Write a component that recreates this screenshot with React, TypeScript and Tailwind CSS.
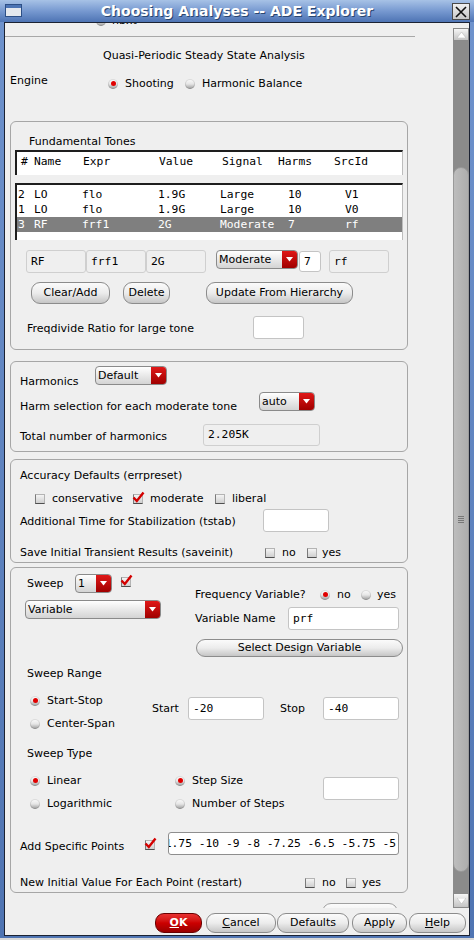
import React from "react";

const MONO = "font-['DejaVu_Sans_Mono',monospace] text-[11.3px]";

const Radio = ({ on }: { on?: boolean }) => (
  <span className="relative inline-block w-[10px] h-[10px] shrink-0 rounded-full bg-linear-to-b from-[#fdfdfd] via-[#e6e6e6] to-[#9a9a9a] shadow-[inset_0_0_0_1px_rgba(0,0,0,0.12)]">
    {on && <span className="absolute left-[2.5px] top-[2px] w-[5px] h-[5px] rounded-full bg-[#e00000]" />}
  </span>
);

const Check = ({ on, className = "" }: { on?: boolean; className?: string }) => (
  <span className={`relative inline-block w-[10px] h-[10px] shrink-0 bg-linear-to-b from-[#f4f4f4] to-[#cfcfcf] border border-[#b4b4b4] border-b-[#4e4e4e] border-l-[#7a7a7a] ${className}`}>
    {on && (
      <svg className="absolute left-[-2px] top-[-4px]" width="13" height="13" viewBox="0 0 13 13">
        <path d="M1.5 6.5 L4.8 10 L11.5 1.5" stroke="#d40000" strokeWidth="2.4" fill="none" />
      </svg>
    )}
  </span>
);

const Combo = ({ text, className = "" }: { text: string; className?: string }) => (
  <div className={`flex h-[19px] rounded-[4px] border border-[#8a8a8a] bg-linear-to-b from-[#ffffff] to-[#d4d4d4] overflow-hidden shrink-0 ${className}`}>
    <div className="flex-1 flex items-center pl-[2px] leading-[14px]">{text}</div>
    <div className="w-[15px] h-full bg-linear-to-b from-[#e01818] to-[#a00000] flex items-center justify-center">
      <svg width="7" height="5" viewBox="0 0 7 5">
        <path d="M0 0 L7 0 L3.5 4.5 Z" fill="#ffffff" />
      </svg>
    </div>
  </div>
);

const Btn = ({ children, className = "" }: { children: React.ReactNode; className?: string }) => (
  <div className={`flex items-center justify-center shrink-0 rounded-[9px] border border-[#8c8c8c] bg-linear-to-b from-[#fbfbfb] via-[#ececec] to-[#c6c6c6] ${className}`}>
    {children}
  </div>
);

const RO = ({ children, className = "" }: { children?: React.ReactNode; className?: string }) => (
  <div className={`flex items-center pl-[4px] bg-[#efefef] border border-[#cfcfcf] rounded-[3px] shrink-0 ${MONO} ${className}`}>
    {children}
  </div>
);

const Input = ({ children, className = "" }: { children?: React.ReactNode; className?: string }) => (
  <div className={`flex items-center pl-[4px] bg-white border border-[#c4c4c4] rounded-[3px] shrink-0 ${MONO} ${className}`}>
    {children}
  </div>
);

const Group = ({ children, className = "" }: { children: React.ReactNode; className?: string }) => (
  <div className={`ml-[5px] w-[398px] border border-[#a6a6a6] rounded-[6px] flex flex-col shrink-0 ${className}`}>{children}</div>
);

const rows = [
  ["2", "LO", "flo", "1.9G", "Large", "10", "V1"],
  ["1", "LO", "flo", "1.9G", "Large", "10", "V0"],
  ["3", "RF", "frf1", "2G", "Moderate", "7", "rf"],
];

export default function App() {
  return (
    <div className="w-[474px] h-[940px] bg-[#d8d8d8] overflow-hidden font-['DejaVu_Sans',sans-serif] text-[11px] leading-[14px] text-black">
      <div className="w-[474px] h-[938px] bg-linear-to-b from-[#6f93cd] to-[#4f74b2] flex flex-col">
        {/* Title bar */}
        <div className="h-[22px] relative flex items-center justify-center bg-linear-to-b from-[#a7c2e6] via-[#7799d0] to-[#4e74b4]">
          <svg className="absolute left-[5px] top-[4px]" width="17" height="13" viewBox="0 0 17 13">
            <rect x="0.5" y="0.5" width="16" height="12" fill="#e4e8ee" stroke="#2d4f86" />
            <rect x="1" y="1" width="15" height="3" fill="#4c74b4" />
          </svg>
          <span className="text-[14px] font-bold text-white leading-[18px] [text-shadow:1px_1px_0_#2a4670]">
            Choosing Analyses -- ADE Explorer
          </span>
          <div className="absolute right-[4px] top-[3px] w-[18px] h-[17px] bg-linear-to-b from-[#f0f0f0] to-[#c8c8c8] border border-[#4a4a4a] flex items-center justify-center">
            <svg width="12" height="12" viewBox="0 0 12 12">
              <path d="M1 1 L11 11 M11 1 L1 11" stroke="#111" strokeWidth="1.6" />
            </svg>
          </div>
        </div>

        {/* Content */}
        <div className="ml-[4px] w-[466px] h-[914px] border border-[#1b2233] bg-[#efefef] flex flex-col">
          <div className="h-[885px] flex">
            {/* Main viewport */}
            <div className="w-[448px] h-[885px] overflow-hidden flex flex-col">
              <div className="h-[13px] overflow-hidden shrink-0">
                <div className="mt-[-9px] pl-[91px] flex items-center h-[14px]">
                  <Radio />
                  <span className="ml-[6px]">nbxt</span>
                </div>
              </div>
              <div className="h-px w-[410px] bg-[#a8a8a8] shrink-0" />

              <div className="mt-[12px] pl-[98px] shrink-0">Quasi-Periodic Steady State Analysis</div>

              <div className="mt-[11px] h-[14px] flex items-start shrink-0">
                <span className="pl-[5px] w-[103px]">Engine</span>
                <div className="mt-[3px] flex items-center">
                  <Radio on />
                  <span className="ml-[7px] w-[60px]">Shooting</span>
                  <Radio />
                  <span className="ml-[7px]">Harmonic Balance</span>
                </div>
              </div>

              {/* Fundamental tones */}
              <Group className="mt-[33px] h-[229px]">
                <div className="mt-[13px] ml-[18px]">Fundamental Tones</div>
                <div className={`mt-[1px] ml-[4px] w-[388px] h-[25px] bg-white border-t-2 border-l-2 border-[#1e1e1e] border-r border-r-[#bdbdbd] pt-[3px] pl-[4px] flex ${MONO}`}>
                  <span className="w-[13px]">#</span>
                  <span className="w-[49px]">Name</span>
                  <span className="w-[76px]">Expr</span>
                  <span className="w-[63px]">Value</span>
                  <span className="w-[56px]">Signal</span>
                  <span className="w-[56px]">Harms</span>
                  <span>SrcId</span>
                </div>
                <div className={`mt-[8px] ml-[4px] w-[388px] h-[57px] bg-white border-t-2 border-l-2 border-[#1e1e1e] border-r border-r-[#bdbdbd] pt-[2px] flex flex-col ${MONO}`}>
                  {rows.map((r, i) => (
                    <div key={i} className={`h-[15px] leading-[16px] flex pl-[1px] ${i === 2 ? "bg-[#7f7f7f] text-white" : ""}`}>
                      <span className="w-[16px]">{r[0]}</span>
                      <span className="w-[48px]">{r[1]}</span>
                      <span className="w-[76px]">{r[2]}</span>
                      <span className="w-[62px]">{r[3]}</span>
                      <span className="w-[68px]">{r[4]}</span>
                      <span className="w-[57px]">{r[5]}</span>
                      <span>{r[6]}</span>
                    </div>
                  ))}
                </div>
                <div className="mt-[10px] ml-[15px] h-[23px] flex items-start">
                  <RO className="w-[60px] h-[23px]">RF</RO>
                  <RO className="w-[60px] h-[23px]">frf1</RO>
                  <RO className="w-[60px] h-[23px]">2G</RO>
                  <Combo text="Moderate" className="ml-[10px] w-[82px]" />
                  <Input className="ml-[1px] mt-[1px] w-[22px] h-[21px]">7</Input>
                  <RO className="ml-[8px] w-[60px] h-[23px]">rf</RO>
                </div>
                <div className="mt-[9px] ml-[20px] h-[22px] flex">
                  <Btn className="w-[79px] h-[22px]">Clear/Add</Btn>
                  <Btn className="ml-[13px] w-[47px] h-[22px]">Delete</Btn>
                  <Btn className="ml-[36px] w-[147px] h-[22px]">Update From Hierarchy</Btn>
                </div>
                <div className="mt-[12px] ml-[16px] h-[23px] flex items-center">
                  <span className="w-[226px] pt-[2px]">Freqdivide Ratio for large tone</span>
                  <Input className="w-[51px] h-[23px]" />
                </div>
              </Group>

              {/* Harmonics */}
              <Group className="mt-[11px] h-[91px] pl-[9px]">
                <div className="h-[26px] flex items-start">
                  <span className="w-[75px] mt-[13px]">Harmonics</span>
                  <Combo text="Default" className="mt-[4px] w-[72px]" />
                </div>
                <div className="h-[30px] flex items-start">
                  <span className="w-[239px] mt-[12px]">Harm selection for each moderate tone</span>
                  <Combo text="auto" className="mt-[4px] w-[56px]" />
                </div>
                <div className="h-[33px] flex items-start">
                  <span className="w-[183px] mt-[12px]">Total number of harmonics</span>
                  <RO className="mt-[6px] w-[117px] h-[22px]">2.205K</RO>
                </div>
              </Group>

              {/* Accuracy */}
              <Group className="mt-[7px] h-[104px] pl-[9px]">
                <div className="mt-[9px]">Accuracy Defaults (errpreset)</div>
                <div className="mt-[9px] h-[14px] flex items-center pl-[15px]">
                  <Check />
                  <span className="ml-[7px] w-[81px]">conservative</span>
                  <Check on />
                  <span className="ml-[7px] w-[65px]">moderate</span>
                  <Check />
                  <span className="ml-[7px]">liberal</span>
                </div>
                <div className="mt-[3px] h-[23px] flex items-start">
                  <span className="w-[243px] mt-[6px]">Additional Time for Stabilization (tstab)</span>
                  <Input className="w-[66px] h-[23px]" />
                </div>
                <div className="mt-[14px] h-[14px] flex items-center">
                  <span className="w-[245px]">Save Initial Transient Results (saveinit)</span>
                  <Check />
                  <span className="ml-[7px] w-[25px]">no</span>
                  <Check />
                  <span className="ml-[5px]">yes</span>
                </div>
              </Group>

              {/* Sweep */}
              <Group className="mt-[4px] h-[326px]">
                <div className="flex items-start">
                  <div className="w-[184px] flex flex-col">
                    <div className="mt-[6px] h-[19px] flex items-center pl-[16px]">
                      <span className="w-[48px]">Sweep</span>
                      <Combo text="1" className="w-[37px]" />
                      <Check on className="ml-[9px] self-start mt-[3px]" />
                    </div>
                    <Combo text="Variable" className="mt-[7px] ml-[14px] w-[136px]" />
                  </div>
                  <div className="flex flex-col">
                    <div className="mt-[20px] h-[14px] flex items-center">
                      <span className="w-[125px]">Frequency Variable?</span>
                      <Radio on />
                      <span className="ml-[7px] w-[24px]">no</span>
                      <Radio />
                      <span className="ml-[6px]">yes</span>
                    </div>
                    <div className="mt-[5px] h-[23px] flex items-center">
                      <span className="w-[93px]">Variable Name</span>
                      <Input className="w-[111px] h-[23px]">prf</Input>
                    </div>
                    <Btn className="mt-[9px] ml-[1px] w-[207px] h-[18px]">Select Design Variable</Btn>
                  </div>
                </div>

                <div className="mt-[9px] ml-[16px] pt-[1px]">Sweep Range</div>
                <div className="mt-[8px] h-[46px] flex items-start pl-[19px]">
                  <div className="w-[122px] flex flex-col">
                    <div className="h-[23px] flex items-center">
                      <Radio on />
                      <span className="ml-[7px]">Start-Stop</span>
                    </div>
                    <div className="h-[23px] flex items-center">
                      <Radio />
                      <span className="ml-[7px]">Center-Span</span>
                    </div>
                  </div>
                  <div className="mt-[8px] w-[36px] h-[23px] flex items-center">Start</div>
                  <Input className="mt-[8px] w-[76px] h-[23px]">-20</Input>
                  <div className="mt-[8px] ml-[16px] w-[43px] h-[23px] flex items-center">Stop</div>
                  <Input className="mt-[8px] w-[76px] h-[23px]">-40</Input>
                </div>

                <div className="mt-[11px] ml-[16px] pt-[1px]">Sweep Type</div>
                <div className="mt-[8px] h-[46px] flex items-start pl-[19px]">
                  <div className="w-[145px] flex flex-col">
                    <div className="h-[23px] flex items-center">
                      <Radio on />
                      <span className="ml-[7px]">Linear</span>
                    </div>
                    <div className="h-[23px] flex items-center">
                      <Radio />
                      <span className="ml-[7px]">Logarithmic</span>
                    </div>
                  </div>
                  <div className="w-[148px] flex flex-col">
                    <div className="h-[23px] flex items-center">
                      <Radio on />
                      <span className="ml-[7px]">Step Size</span>
                    </div>
                    <div className="h-[23px] flex items-center">
                      <Radio />
                      <span className="ml-[7px]">Number of Steps</span>
                    </div>
                  </div>
                  <Input className="mt-[8px] w-[76px] h-[23px]" />
                </div>

                <div className="mt-[17px] h-[23px] flex items-start pl-[9px]">
                  <span className="w-[125px] mt-[8px]">Add Specific Points</span>
                  <Check on className="mt-[8px]" />
                  <div className={`ml-[13px] w-[231px] h-[23px] bg-white border border-[#8e8e8e] rounded-[3px] overflow-hidden flex items-center justify-end pr-[2px] whitespace-nowrap ${MONO}`}>
                    -11.75 -10 -9 -8 -7.25 -6.5 -5.75 -5
                  </div>
                </div>

                <div className="mt-[20px] h-[14px] flex items-center pl-[9px] pt-[1px]">
                  <span className="w-[285px]">New Initial Value For Each Point (restart)</span>
                  <Check />
                  <span className="ml-[7px] w-[24px]">no</span>
                  <Check />
                  <span className="ml-[6px]">yes</span>
                </div>
              </Group>

              <div className="mt-[10px] ml-[317px] w-[76px] h-[14px] shrink-0 border border-[#a0a0a0] rounded-t-[9px] bg-linear-to-b from-[#fbfbfb] to-[#ececec]" />
            </div>

            {/* Scrollbar */}
            <div className="w-[16px] pt-[5px] flex flex-col">
              <div className="h-[13px] bg-linear-to-b from-[#f6f6f6] to-[#c4c4c4] border border-[#8a8a8a] flex items-center justify-center shrink-0">
                <svg width="9" height="6" viewBox="0 0 9 6">
                  <path d="M0 6 L4.5 0 L9 6 Z" fill="#ffffff" stroke="#b0b0b0" strokeWidth="0.5" />
                </svg>
              </div>
              <div className="h-[126px] bg-[#8b8b8b] shrink-0" />
              <div className="h-[705px] bg-[#8b8b8b] shrink-0">
                <div className="h-full rounded-[8px] bg-linear-to-r from-[#bdbdbd] to-[#adadad] border border-[#9a9a9a] flex items-center justify-center">
                  <div className="flex flex-col gap-[1px]">
                    <div className="w-[6px] h-px bg-[#777]" />
                    <div className="w-[6px] h-px bg-[#777]" />
                    <div className="w-[6px] h-px bg-[#777]" />
                    <div className="w-[6px] h-px bg-[#777]" />
                  </div>
                </div>
              </div>
              <div className="h-[21px] bg-[#8b8b8b] shrink-0" />
              <div className="h-[15px] bg-linear-to-b from-[#f6f6f6] to-[#c4c4c4] border border-[#8a8a8a] flex items-center justify-center shrink-0">
                <svg width="9" height="6" viewBox="0 0 9 6">
                  <path d="M0 0 L4.5 6 L9 0 Z" fill="#ffffff" stroke="#b0b0b0" strokeWidth="0.5" />
                </svg>
              </div>
            </div>
          </div>

          {/* Footer */}
          <div className="flex-1 flex items-start pt-[5px] pl-[150px]">
            <div className="w-[47px] h-[20px] rounded-[9px] border border-[#6a0000] bg-linear-to-b from-[#e83030] via-[#cc0000] to-[#9a0000] flex items-center justify-center text-white font-bold">
              <span><span className="underline">O</span>K</span>
            </div>
            <Btn className="ml-[4px] w-[70px] h-[20px]"><span><span className="underline">C</span>ancel</span></Btn>
            <Btn className="ml-[1px] w-[72px] h-[20px]">Defaults</Btn>
            <Btn className="ml-[3px] w-[55px] h-[20px]">Apply</Btn>
            <Btn className="ml-[2px] w-[57px] h-[20px]"><span><span className="underline">H</span>elp</span></Btn>
          </div>
        </div>
      </div>
    </div>
  );
}
